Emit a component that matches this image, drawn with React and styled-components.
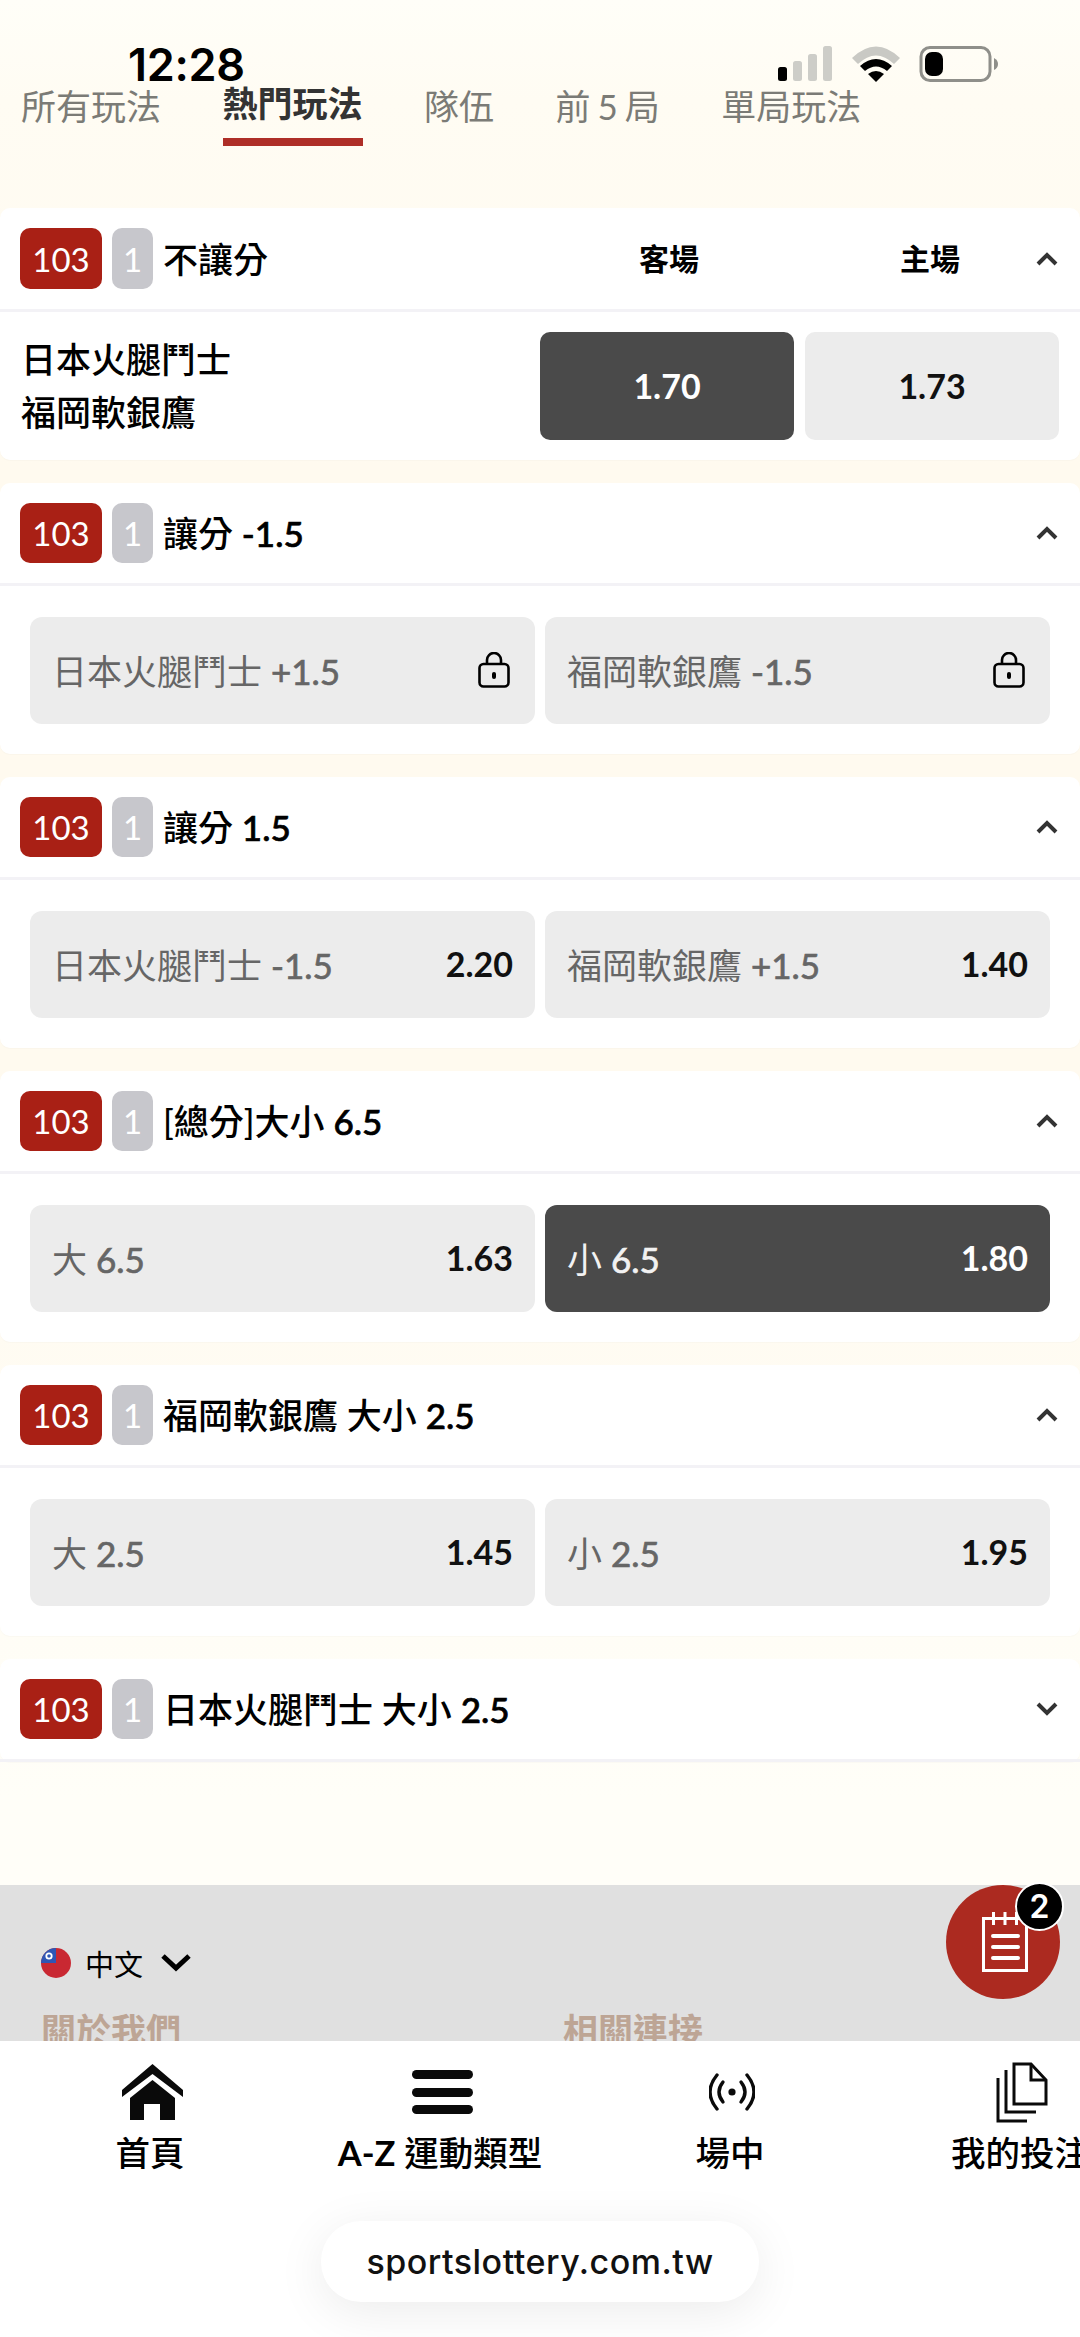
import React from "react";
import styled, { createGlobalStyle } from "styled-components";

const GlobalStyle = createGlobalStyle`
  html, body {
    margin: 0;
    padding: 0;
    background: #fffcf3;
  }
  * {
    box-sizing: border-box;
  }
`;

const Page = styled.div`
  position: relative;
  display: flex;
  flex-direction: column;
  width: 1080px;
  height: 2337px;
  overflow: hidden;
  font-family: Lato, "Noto Sans CJK TC", sans-serif;
  background: linear-gradient(#fffef8 0, #fffcf3 100px, #fffaef 470px, #fffaef 1100px, #fffef8 1800px);
  color: #000;
`;

const StatusBar = styled.div`
  position: absolute;
  top: 0;
  left: 0;
  right: 0;
  height: 90px;
  svg {
    position: absolute;
    top: 44px;
    left: 776px;
  }
`;

const Clock = styled.div`
  position: absolute;
  left: 128px;
  top: 38px;
  font-family: Inter, sans-serif;
  font-size: 45px;
  line-height: 54px;
  font-weight: 600;
  letter-spacing: -0.3px;
`;

const Tabs = styled.nav`
  display: flex;
  align-items: flex-start;
  gap: 61.5px;
  height: 208px;
  padding: 78px 21px 0;
`;

const Tab = styled.div`
  margin-top: ${(p) => (p.$active ? 3 : 6)}px;
  padding-bottom: ${(p) => (p.$active ? 13 : 0)}px;
  border-bottom: ${(p) => (p.$active ? "8px solid #ae2e27" : "none")};
  font-size: 35px;
  line-height: 44px;
  word-spacing: -2px;
  font-weight: ${(p) => (p.$active ? 700 : 400)};
  color: ${(p) => (p.$active ? "#333" : "#7b7b76")};
  white-space: nowrap;
`;

const Cards = styled.div`
  display: flex;
  flex-direction: column;
  gap: 23px;
`;

const Card = styled.section`
  background: #fff;
  border-radius: 10px;
  box-shadow: 0 1px 1px rgba(0, 0, 0, 0.02);
`;

const CardHeader = styled.header`
  display: flex;
  align-items: center;
  height: ${(p) => (p.$tall ? 104 : 103)}px;
  padding: 0 21px 0 20px;
  border-bottom: 3px solid #f3f2f6;
`;

const CodeBadge = styled.span`
  display: flex;
  align-items: center;
  justify-content: center;
  width: ${(p) => (p.$muted ? 41 : 82)}px;
  height: ${(p) => (p.$tall ? 61 : 60)}px;
  margin-right: ${(p) => (p.$muted ? 10 : 10)}px;
  border-radius: 10px;
  background: ${(p) => (p.$muted ? "#c7c7cc" : "#a92015")};
  color: #fff;
  font-size: 33px;
`;

const Title = styled.h3`
  flex: 1;
  margin: 0;
  font-size: 35px;
  line-height: 44px;
  font-weight: 500;
  white-space: nowrap;
`;

const Num = styled.span`
  -webkit-text-stroke: 0.7px currentColor;
`;

const ColumnLabels = styled.div`
  display: flex;
  gap: 61px;
  margin: 0 5px 4px 0;
`;

const ColumnLabel = styled.span`
  width: 200px;
  text-align: center;
  font-size: 30px;
  font-weight: 700;
`;

const Chevron = styled.svg`
  flex: none;
  width: 24px;
  height: 16px;
`;

const MatchBody = styled.div`
  display: flex;
  align-items: center;
  justify-content: space-between;
  height: 148px;
  padding: 0 21px;
`;

const Teams = styled.div`
  font-size: 35px;
  line-height: 53px;
  font-weight: 500;
`;

const OddsPair = styled.div`
  display: flex;
  gap: 11px;
`;

const OddsButton = styled.div`
  display: flex;
  align-items: center;
  justify-content: center;
  width: 254px;
  height: 108px;
  padding-bottom: 2px;
  border-radius: 10px;
  background: ${(p) => (p.$on ? "#4a4a4a" : "#ececec")};
  color: ${(p) => (p.$on ? "#fff" : "#111")};
  font-size: 34px;
  font-weight: 700;
`;

const OptionsBody = styled.div`
  display: flex;
  gap: 10px;
  padding: 31px 30px 30px;
`;

const Option = styled.div`
  flex: 1;
  display: flex;
  align-items: center;
  justify-content: space-between;
  height: 107px;
  padding: 0 22px 2px;
  border-radius: 12px;
  background: ${(p) => (p.$on ? "#4a4a4a" : "#ececec")};
`;

const OptionLabel = styled.span`
  font-size: 35px;
  color: ${(p) => (p.$on ? "#f2f2f2" : "#666")};
  white-space: nowrap;
`;

const OptionOdds = styled.span`
  font-size: 34px;
  font-weight: 700;
  color: ${(p) => (p.$on ? "#fff" : "#111")};
`;

const LockSlot = styled.span`
  display: flex;
  margin-right: 3px;
`;

const Footer = styled.footer`
  flex: 1;
  margin-top: 123px;
  padding: 61px 41px 0;
  background: #e0e0e0;
  overflow: hidden;
`;

const LangRow = styled.div`
  display: flex;
  align-items: center;
  height: 34px;
  font-size: 29px;
  svg:first-child {
    margin-right: 14px;
  }
  span {
    margin-right: 18px;
  }
`;

const FooterHeads = styled.div`
  display: flex;
  margin-top: 28px;
  font-size: 35px;
  line-height: 44px;
  font-weight: 700;
  color: #bda595;
`;

const FooterHead = styled.div`
  flex: none;
  width: 522px;
`;

const BottomArea = styled.div`
  flex: none;
  height: 296px;
  background: #fff;
  position: relative;
`;

const NavRow = styled.div`
  display: flex;
  padding: 21px 0 0 5px;
  width: 1080px;
  overflow: hidden;
`;

const NavItem = styled.div`
  flex: none;
  display: flex;
  flex-direction: column;
  align-items: center;
  width: 290px;
  font-size: 34.5px;
  line-height: 44px;
  font-weight: 500;
  white-space: nowrap;
`;

const NavLatin = styled.span`
  font-weight: 700;
`;

const NavIcon = styled.div`
  display: flex;
  align-items: center;
  justify-content: center;
  height: 60px;
  margin: 0 0 9px 4px;
`;

const UrlPill = styled.div`
  position: absolute;
  left: 321px;
  top: 180px;
  display: flex;
  align-items: center;
  justify-content: center;
  width: 438px;
  height: 81px;
  border-radius: 40px;
  background: #fff;
  box-shadow: 0 10px 50px rgba(0, 0, 0, 0.08);
  font-family: Inter, sans-serif;
  font-size: 34px;
  font-weight: 500;
  letter-spacing: 0.5px;
  color: #111;
`;

const Fab = styled.div`
  position: absolute;
  left: 946px;
  top: 1885px;
  display: flex;
  align-items: center;
  justify-content: center;
  width: 114px;
  height: 114px;
  padding-left: 3px;
  border-radius: 50%;
  background: #ac2a20;
`;

const FabCount = styled.div`
  position: absolute;
  left: 69px;
  top: -3px;
  display: flex;
  align-items: center;
  justify-content: center;
  width: 49px;
  height: 49px;
  border-radius: 50%;
  border: 2px solid #fff;
  background: #000;
  color: #fff;
  font-family: Inter, sans-serif;
  font-size: 32px;
  font-weight: 600;
`;

const ChevronIcon = ({ open }) => (
  <Chevron viewBox="0 0 24 16">
    <path
      d={open ? "M3 13 L12 4 L21 13" : "M3 3 L12 12 L21 3"}
      fill="none"
      stroke="#333"
      strokeWidth="4"
    />
  </Chevron>
);

const LockIcon = () => (
  <svg width="32" height="36" viewBox="0 0 32 36">
    <rect x="1.5" y="12" width="29" height="22.5" rx="4" fill="none" stroke="#000" strokeWidth="2.6" />
    <path d="M9 12 V8 a7 7 0 0 1 14 0 V12" fill="none" stroke="#000" strokeWidth="2.6" />
    <rect x="14" y="20" width="4" height="7" rx="2" fill="#000" />
  </svg>
);

const StatusIcons = () => (
  <svg width="226" height="42" viewBox="776 44 226 42">
    <rect x="778" y="67" width="9" height="14" rx="2.5" fill="#000" />
    <rect x="793" y="61" width="9" height="20" rx="2.5" fill="#cdcdc8" />
    <rect x="808" y="54" width="9" height="27" rx="2.5" fill="#cdcdc8" />
    <rect x="823" y="46" width="9" height="35" rx="2.5" fill="#cdcdc8" />
    <path d="M852 58 Q876 35 900 58 L894 64 Q876 47 858 64 Z" fill="#c9c9c4" />
    <path d="M860 66 Q876 52 892 66 L887 71 Q876 62 865 71 Z" fill="#000" />
    <path d="M868 74 Q876 68 884 74 L876 82 Z" fill="#000" />
    <rect x="921" y="47.5" width="69" height="33" rx="9" fill="none" stroke="#8f8f8a" strokeWidth="3" />
    <rect x="925" y="52" width="18" height="24" rx="7" fill="#000" />
    <path d="M994 58 Q998 60 998 64 Q998 68 994 70 Z" fill="#8f8f8a" />
  </svg>
);

const FlagIcon = () => (
  <svg width="30" height="30" viewBox="0 0 30 30">
    <circle cx="15" cy="15" r="15" fill="#c92832" />
    <path d="M0 15 A15 15 0 0 1 15 0 V15 Z" fill="#2f56b5" />
    <circle cx="8" cy="8" r="3.6" fill="#fff" />
    <circle cx="8" cy="8" r="1.8" fill="#2f56b5" />
  </svg>
);

const SmallChevron = () => (
  <svg width="30" height="18" viewBox="0 0 30 18">
    <path d="M2 2 L15 14 L28 2" fill="none" stroke="#000" strokeWidth="5" />
  </svg>
);

const HomeIcon = () => (
  <svg width="61" height="56" viewBox="0 0 61 56">
    <path d="M30.5 0 L61 26 V33 L30.5 10 L0 33 V26 Z" fill="#0a0a0a" />
    <path d="M30.5 16 L53 34 V56 H38 V40 H22 V56 H8 V34 Z" fill="#0a0a0a" />
  </svg>
);

const MenuIcon = () => (
  <svg width="61" height="45" viewBox="0 0 61 45">
    <rect y="0" width="61" height="9" rx="4.5" fill="#0a0a0a" />
    <rect y="18" width="61" height="9" rx="4.5" fill="#0a0a0a" />
    <rect y="35" width="61" height="9" rx="4.5" fill="#0a0a0a" />
  </svg>
);

const LiveIcon = () => (
  <svg width="46" height="38" viewBox="0 0 46 38" fill="none" stroke="#0a0a0a" strokeWidth="3.4" strokeLinecap="round">
    <circle cx="23" cy="19" r="3.6" fill="#0a0a0a" stroke="none" />
    <path d="M14 9 Q6 19 14 29" />
    <path d="M32 9 Q40 19 32 29" />
    <path d="M8 2 Q-6 19 8 36" />
    <path d="M38 2 Q52 19 38 36" />
  </svg>
);

const BetsIcon = () => (
  <svg width="52" height="61" viewBox="0 0 52 61" fill="none" stroke="#0a0a0a" strokeWidth="3">
    <path d="M18 2 H35 L50 18 V42 H18 Z" />
    <path d="M35 2 V18 H50" />
    <path d="M10 8 V50 H40" />
    <path d="M2 16 V59 H31" />
  </svg>
);

const NotebookIcon = () => (
  <svg width="46" height="60" viewBox="0 0 46 60" fill="none" stroke="#fff">
    <rect x="1.5" y="6.5" width="43" height="52" strokeWidth="3" />
    <path d="M11.5 0 V13 M23 0 V13 M34.5 0 V13" strokeWidth="3" />
    <path d="M11 24 H36 M11 35 H36 M11 46 H36" strokeWidth="4" strokeLinecap="round" />
  </svg>
);

const markets = [
  { title: "讓分 -1.5", options: [{ label: "日本火腿鬥士 +1.5", locked: true }, { label: "福岡軟銀鷹 -1.5", locked: true }] },
  { title: "讓分 1.5", options: [{ label: "日本火腿鬥士 -1.5", odds: "2.20" }, { label: "福岡軟銀鷹 +1.5", odds: "1.40" }] },
  { title: "[總分]大小 6.5", options: [{ label: "大 6.5", odds: "1.63" }, { label: "小 6.5", odds: "1.80", on: true }] },
  { title: "福岡軟銀鷹 大小 2.5", options: [{ label: "大 2.5", odds: "1.45" }, { label: "小 2.5", odds: "1.95" }] },
];

// the handicap numbers sit heavier than the chinese text next to them
const withNums = (text) =>
  text.split(/([-+]?\d[\d.]*)/).map((part, i) => (i % 2 ? <Num key={i}>{part}</Num> : part));

const Badges = ({ tall }) => (
  <>
    <CodeBadge $tall={tall}>103</CodeBadge>
    <CodeBadge $tall={tall} $muted>1</CodeBadge>
  </>
);

export default function App() {
  return (
    <Page>
      <GlobalStyle />
      <Tabs>
        <Tab>所有玩法</Tab>
        <Tab $active>熱門玩法</Tab>
        <Tab>隊伍</Tab>
        <Tab>前 5 局</Tab>
        <Tab>單局玩法</Tab>
      </Tabs>

      <Cards>
        <Card>
          <CardHeader $tall>
            <Badges tall />
            <Title>不讓分</Title>
            <ColumnLabels>
              <ColumnLabel>客場</ColumnLabel>
              <ColumnLabel>主場</ColumnLabel>
            </ColumnLabels>
            <ChevronIcon open />
          </CardHeader>
          <MatchBody>
            <Teams>
              日本火腿鬥士
              <br />
              福岡軟銀鷹
            </Teams>
            <OddsPair>
              <OddsButton $on>1.70</OddsButton>
              <OddsButton>1.73</OddsButton>
            </OddsPair>
          </MatchBody>
        </Card>

        {markets.map(({ title, options }) => (
          <Card key={title}>
            <CardHeader>
              <Badges />
              <Title>{withNums(title)}</Title>
              <ChevronIcon open />
            </CardHeader>
            <OptionsBody>
              {options.map(({ label, odds, locked, on }) => (
                <Option key={label} $on={on}>
                  <OptionLabel $on={on}>{withNums(label)}</OptionLabel>
                  {locked ? (
                    <LockSlot>
                      <LockIcon />
                    </LockSlot>
                  ) : (
                    <OptionOdds $on={on}>{odds}</OptionOdds>
                  )}
                </Option>
              ))}
            </OptionsBody>
          </Card>
        ))}

        <Card>
          <CardHeader>
            <Badges />
            <Title>{withNums("日本火腿鬥士 大小 2.5")}</Title>
            <ChevronIcon />
          </CardHeader>
        </Card>
      </Cards>

      <Footer>
        <LangRow>
          <FlagIcon />
          <span>中文</span>
          <SmallChevron />
        </LangRow>
        <FooterHeads>
          <FooterHead>關於我們</FooterHead>
          <FooterHead>相關連接</FooterHead>
        </FooterHeads>
      </Footer>

      <BottomArea>
        <NavRow>
          <NavItem>
            <NavIcon><HomeIcon /></NavIcon>
            首頁
          </NavItem>
          <NavItem>
            <NavIcon><MenuIcon /></NavIcon>
            <span><NavLatin>A-Z</NavLatin> 運動類型</span>
          </NavItem>
          <NavItem>
            <NavIcon><LiveIcon /></NavIcon>
            場中
          </NavItem>
          <NavItem>
            <NavIcon><BetsIcon /></NavIcon>
            我的投注
          </NavItem>
        </NavRow>
        <UrlPill>sportslottery.com.tw</UrlPill>
      </BottomArea>

      <Fab>
        <NotebookIcon />
        <FabCount>2</FabCount>
      </Fab>

      <StatusBar>
        <Clock>12:28</Clock>
        <StatusIcons />
      </StatusBar>
    </Page>
  );
}
